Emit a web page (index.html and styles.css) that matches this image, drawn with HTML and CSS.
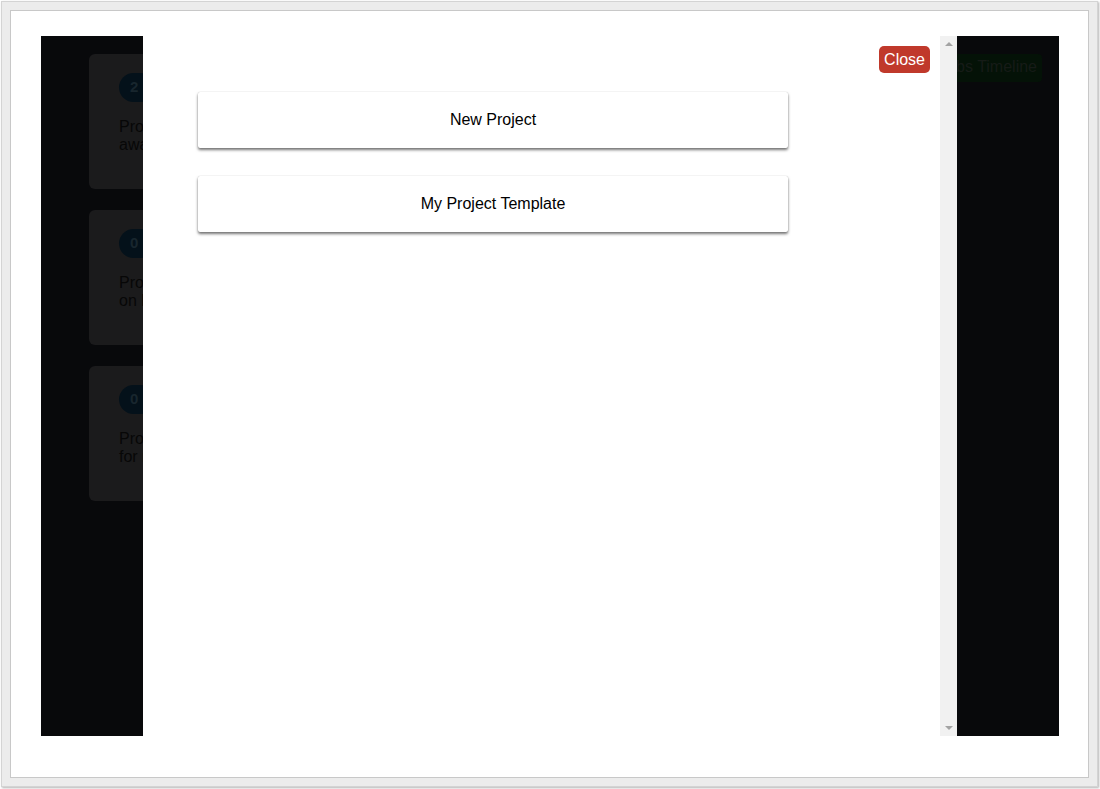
FILE: index.html
```html
<!DOCTYPE html>
<html lang="en">
<head>
    <meta charset="UTF-8">
    <meta name="viewport" content="width=device-width, initial-scale=1.0">
    <title>Choose a Project</title>
    <link rel="stylesheet" href="styles.css">
</head>
<body>
    <div class="shell">
        <div class="screen">
            <div class="viewport">
                <div class="page">
                    <div class="stats">
                        <div class="stat-card">
                            <span class="badge">2</span>
                            <p>Projects pending<br>awaiting approval.</p>
                        </div>
                        <div class="stat-card">
                            <span class="badge">0</span>
                            <p>Projects currently<br>on hold.</p>
                        </div>
                        <div class="stat-card">
                            <span class="badge">0</span>
                            <p>Projects ready<br>for review.</p>
                        </div>
                    </div>
                    <div class="page-actions">
                        <span class="btn-timeline">Jobs Timeline</span>
                    </div>
                </div>

                <div class="modal">
                    <div class="modal-body">
                        <span class="btn-close">Close</span>
                        <div class="choice">New Project</div>
                        <div class="choice">My Project Template</div>
                    </div>
                    <div class="scrollbar">
                        <span class="arrow arrow-up"></span>
                        <span class="arrow arrow-down"></span>
                    </div>
                </div>
            </div>
        </div>
    </div>
</body>
</html>
```

FILE: styles.css
```css
body {
    margin: 0;
    background-color: #fff;
    font-family: 'Liberation Sans', Arial, sans-serif;
    font-size: 16px;
}
.shell {
    width: 1079px;
    margin: 1px 1px 2px 1px;
    border: 1px solid #d4d4d4;
    background-color: #ececec;
    padding: 8px;
    box-shadow: 1px 1px 2px rgba(0,0,0,0.3);
}
.screen {
    border: 1px solid #c8c8c8;
    background-color: #fff;
    padding: 25px 30px 41px 30px;
}
.viewport {
    position: relative;
    width: 1018px;
    height: 700px;
    overflow: hidden;
    background-color: #08090b;
}
.page {
    display: flex;
    justify-content: space-between;
    padding: 18px 17px 0 48px;
}
.stats {
    display: flex;
    flex-direction: column;
    gap: 21px;
    width: 300px;
}
.stat-card {
    height: 135px;
    box-sizing: border-box;
    padding: 19px 30px;
    background-color: #1b1b1c;
    border-radius: 6px;
}
.badge {
    display: inline-block;
    min-width: 14px;
    padding: 5px 11px 6px 11px;
    border-radius: 15px;
    background-color: #04111a;
    color: #18262e;
    font-weight: bold;
    font-size: 15px;
    line-height: 18px;
}
.stat-card p {
    margin: 16px 0 0 0;
    color: #070707;
    line-height: 18px;
}
.btn-timeline {
    display: inline-block;
    padding: 4px 5px 6px 12px;
    background-color: #041207;
    border-radius: 4px;
    color: #161b17;
    font-size: 16px;
    line-height: 18px;
}
.modal {
    position: absolute;
    left: 102px;
    top: 0;
    width: 814px;
    height: 700px;
    display: flex;
    background-color: #fff;
}
.modal-body {
    position: relative;
    flex: 1;
    padding: 56px 0 0 55px;
}
.btn-close {
    position: absolute;
    top: 10px;
    right: 10px;
    padding: 5px 5px 4px 5px;
    background-color: #c0392b;
    border-radius: 5px;
    color: #fff;
    line-height: 18px;
}
.choice {
    width: 590px;
    height: 56px;
    line-height: 56px;
    margin-bottom: 28px;
    text-align: center;
    color: #000;
    background-color: #fff;
    border-radius: 2px;
    box-shadow: 0 2px 3px rgba(0,0,0,0.55), 0 0 1px rgba(0,0,0,0.25);
}
.scrollbar {
    position: relative;
    width: 17px;
    background-color: #f1f1f1;
}
.arrow {
    position: absolute;
    left: 5px;
    width: 0;
    height: 0;
    border-left: 4px solid transparent;
    border-right: 4px solid transparent;
}
.arrow-up {
    top: 6px;
    border-bottom: 4px solid #a3a3a3;
}
.arrow-down {
    bottom: 6px;
    border-top: 4px solid #a3a3a3;
}
```
